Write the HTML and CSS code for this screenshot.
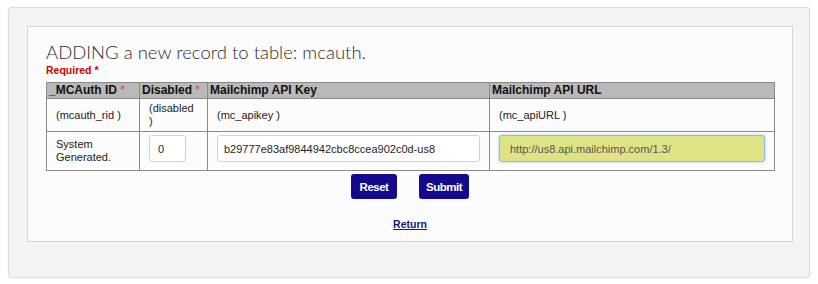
FILE: index.html
```html
<!DOCTYPE html>
<html lang="en">
<head>
  <meta charset="UTF-8" />
  <title>Add record - mcauth</title>
  <link rel="stylesheet" href="styles.css">
</head>
<body>
  <div class="outer">
    <div class="panel">
      <h2 class="title">ADDING a new record to table: mcauth.</h2>
      <div class="required">Required *</div>

      <form class="record-form" onsubmit="return false;">
        <table class="record-table">
          <colgroup>
            <col class="c-id">
            <col class="c-disabled">
            <col class="c-key">
            <col class="c-url">
          </colgroup>
          <tr class="head">
            <th>_MCAuth ID <span class="star">*</span></th>
            <th>Disabled <span class="star">*</span></th>
            <th>Mailchimp API Key</th>
            <th>Mailchimp API URL</th>
          </tr>
          <tr class="names">
            <td>(mcauth_rid )</td>
            <td>(disabled )</td>
            <td>(mc_apikey )</td>
            <td>(mc_apiURL )</td>
          </tr>
          <tr class="values">
            <td>System Generated.</td>
            <td><input type="text" class="field small" value="0"></td>
            <td><input type="text" class="field" value="b29777e83af9844942cbc8ccea902c0d-us8"></td>
            <td><input type="text" class="field focused" value="http://us8.api.mailchimp.com/1.3/"></td>
          </tr>
        </table>

        <div class="button-group">
          <button type="reset" class="btn reset">Reset</button>
          <button type="submit" class="btn submit">Submit</button>
        </div>
      </form>

      <div class="return"><a href="#">Return</a></div>
    </div>
  </div>
</body>
</html>
```

FILE: styles.css
```css
body {
  margin: 0;
  background: #ffffff;
  font-family: "Liberation Sans", Arial, sans-serif;
}
.outer {
  margin: 7px 8px;
  padding: 18px 16px 35px 18px;
  background: #f4f4f4;
  border: 1px solid #dcdcdc;
  border-radius: 3px;
  box-shadow: 0 0 2px rgba(0,0,0,0.06);
}
.panel {
  background: #fcfcfc;
  border: 1px solid #d4d4d4;
  padding: 14px 18px 11px 18px;
}
.title {
  margin: 0;
  font-family: Lato, "Open Sans", sans-serif;
  font-weight: 300;
  font-size: 18.5px;
  line-height: 22px;
  color: #2e2e2e;
}
.required {
  margin-top: 1px;
  font-size: 10.5px;
  line-height: 12px;
  font-weight: bold;
  color: #d40000;
}
.record-form {
  margin: 6px 0 0 0;
}
.record-table {
  width: 728px;
  border-collapse: collapse;
  table-layout: fixed;
}
.c-id { width: 93px; }
.c-disabled { width: 68px; }
.c-key { width: 282px; }
.c-url { width: 285px; }
.record-table th,
.record-table td {
  border: 1px solid #8a8a8a;
  text-align: left;
}
.record-table th {
  background: #b9b9b9;
  font-size: 12px;
  line-height: 14px;
  font-weight: bold;
  color: #111111;
  padding: 0 2px 1px 2px;
}
.star {
  color: #e23b3b;
  font-weight: normal;
}
.record-table td {
  font-size: 11px;
  line-height: 13px;
  color: #222222;
  padding: 3px 9px;
  vertical-align: middle;
}
.field {
  display: block;
  box-sizing: border-box;
  width: 263px;
  height: 27px;
  margin: 0 0 5px 0;
  padding: 0 6px;
  border: 1px solid #d2d2d2;
  border-radius: 3px;
  background: #ffffff;
  font-family: "Liberation Sans", Arial, sans-serif;
  font-size: 11px;
  color: #1e1e1e;
}
.field.small {
  width: 37px;
  padding: 0 8px;
}
.field.focused {
  width: 266px;
  padding: 0 10px;
  background: #dfe385;
  border-color: #8fbbe6;
  box-shadow: 0 0 3px #9ec8f1;
  color: #555555;
}
.button-group {
  display: flex;
  justify-content: center;
  gap: 22px;
  margin-top: 3px;
}
.btn {
  height: 25px;
  padding: 0;
  border: none;
  border-radius: 3px;
  background: #14088d;
  color: #ffffff;
  font-family: "Liberation Sans", Arial, sans-serif;
  font-size: 11.5px;
  letter-spacing: -0.5px;
  font-weight: bold;
  cursor: pointer;
}
.btn.reset { width: 46px; }
.btn.submit { width: 50px; }
.return {
  margin-top: 19px;
  text-align: center;
  font-size: 10.5px;
  line-height: 12px;
  font-weight: bold;
}
.return a {
  color: #15158a;
}
```
